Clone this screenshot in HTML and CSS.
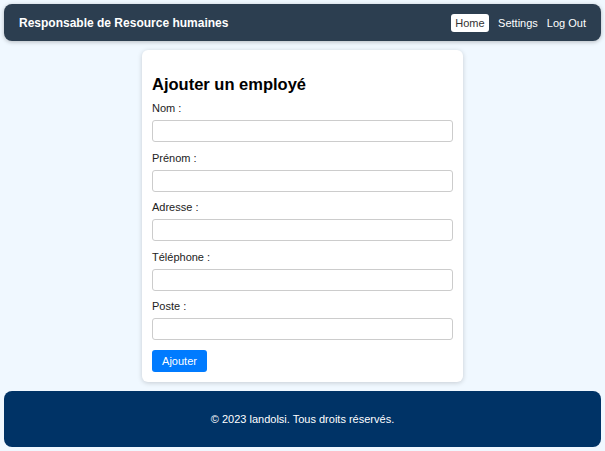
FILE: index.html
```html
<!DOCTYPE html>
<html lang="fr">
<head>
<meta charset="utf-8">
<title>Ajouter un employé</title>
<link rel="stylesheet" href="styles.css">
</head>
<body>
<header class="topbar">
  <div class="brand">Responsable de Resource humaines</div>
  <nav class="nav">
    <a class="nav-link active" href="#">Home</a>
    <a class="nav-link" href="#">Settings</a>
    <a class="nav-link" href="#">Log Out</a>
  </nav>
</header>
<main class="content">
  <form class="card">
    <h2 class="card-title">Ajouter un employé</h2>
    <label class="field-label">Nom :</label>
    <input class="field-input" type="text">
    <label class="field-label">Prénom :</label>
    <input class="field-input" type="text">
    <label class="field-label">Adresse :</label>
    <input class="field-input" type="text">
    <label class="field-label">Téléphone :</label>
    <input class="field-input" type="text">
    <label class="field-label">Poste :</label>
    <input class="field-input" type="text">
    <button class="btn" type="button">Ajouter</button>
  </form>
</main>
<footer class="footer">© 2023 landolsi. Tous droits réservés.</footer>
</body>
</html>
```
FILE: styles.css
```css
* { box-sizing: border-box; }
html, body { height: 100%; }
body {
  margin: 0;
  padding: 4px;
  background: #f0f8ff;
  font-family: "Liberation Sans", Arial, sans-serif;
  color: #222;
  display: flex;
  flex-direction: column;
}
.topbar {
  height: 37px;
  background: #2c3e50;
  border-radius: 8px;
  box-shadow: 0 1px 4px rgba(0,0,0,0.25);
  display: flex;
  align-items: center;
  justify-content: space-between;
  padding: 0 15px;
}
.brand {
  color: #fff;
  font-weight: bold;
  font-size: 12px;
}
.nav { display: flex; align-items: center; gap: 9px; }
.nav-link {
  color: #fff;
  text-decoration: none;
  font-size: 11px;
  line-height: 18px;
}
.nav-link.active {
  background: #fff;
  color: #333;
  padding: 0 4.5px;
  border-radius: 3px;
}
.content {
  flex: 1;
  display: flex;
  justify-content: center;
  padding-top: 9px;
}
.card {
  width: 321px;
  align-self: flex-start;
  background: #fff;
  border-radius: 6px;
  box-shadow: 0 1px 5px rgba(0,0,0,0.18);
  padding: 10px;
  display: flex;
  flex-direction: column;
}
.card-title {
  font-size: 16.5px;
  font-weight: bold;
  color: #000;
  margin: 14px 0 6px;
  line-height: 21px;
}
.field-label {
  font-size: 11px;
  line-height: 14px;
  color: #222;
  margin-bottom: 5px;
}
.field-input {
  height: 22px;
  border: 1px solid #ccc;
  border-radius: 3px;
  margin: 0 0 8.5px;
  width: 100%;
}
.btn {
  align-self: flex-start;
  margin-top: 1.5px;
  width: 55px;
  height: 22px;
  background: #007bff;
  color: #fff;
  border: none;
  border-radius: 3px;
  font-family: inherit;
  font-size: 11px;
}
.footer {
  margin-top: 9px;
  height: 56px;
  background: #003366;
  border-radius: 8px;
  color: #fff;
  font-size: 11px;
  display: flex;
  align-items: center;
  justify-content: center;
}
```
